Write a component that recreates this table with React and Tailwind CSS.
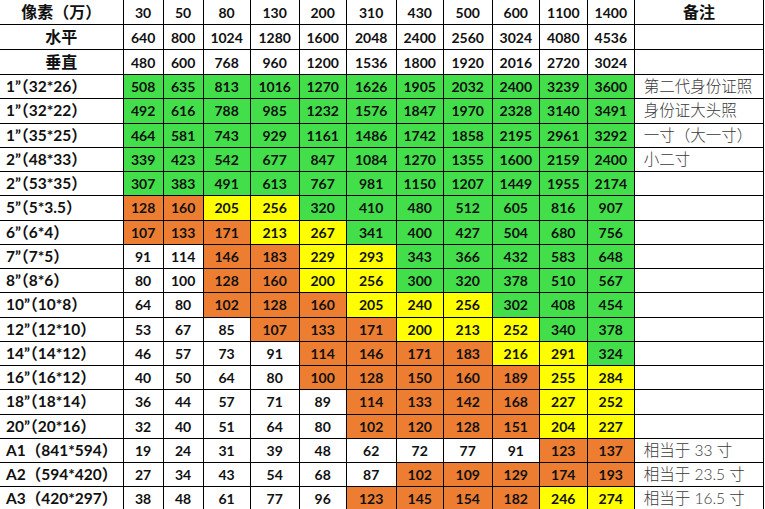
const heads = ['30', '50', '80', '130', '200', '310', '430', '500', '600', '1100', '1400'];

const colW = ['w-[123px]', 'w-[40px]', 'w-[40px]', 'w-[47px]', 'w-[49px]', 'w-[47px]', 'w-[50px]', 'w-[47px]', 'w-[49px]', 'w-[47px]', 'w-[48px]', 'w-[47px]', 'w-[129px]'];

const fills = {
    g: 'bg-[#42df4a]',
    y: 'bg-[#ffff00]',
    o: 'bg-[#ed7d31]',
    w: 'bg-white',
};

// label, values, colour codes, note
const rows = [
    ['1”（32*26）', '508 635 813 1016 1270 1626 1905 2032 2400 3239 3600', 'ggggggggggg', '第二代身份证照'],
    ['1”（32*22）', '492 616 788 985 1232 1576 1847 1970 2328 3140 3491', 'ggggggggggg', '身份证大头照'],
    ['1”（35*25）', '464 581 743 929 1161 1486 1742 1858 2195 2961 3292', 'ggggggggggg', '一寸（大一寸）'],
    ['2”（48*33）', '339 423 542 677 847 1084 1270 1355 1600 2159 2400', 'ggggggggggg', '小二寸'],
    ['2”（53*35）', '307 383 491 613 767 981 1150 1207 1449 1955 2174', 'ggggggggggg', ''],
    ['5”（5*3.5）', '128 160 205 256 320 410 480 512 605 816 907', 'ooyyggggggg', ''],
    ['6”（6*4）', '107 133 171 213 267 341 400 427 504 680 756', 'oooyygggggg', ''],
    ['7”（7*5）', '91 114 146 183 229 293 343 366 432 583 648', 'wwooyyggggg', ''],
    ['8”（8*6）', '80 100 128 160 200 256 300 320 378 510 567', 'wwooyyggggg', ''],
    ['10”（10*8）', '64 80 102 128 160 205 240 256 302 408 454', 'wwoooyyyggg', ''],
    ['12”（12*10）', '53 67 85 107 133 171 200 213 252 340 378', 'wwwoooyyygg', ''],
    ['14”（14*12）', '46 57 73 91 114 146 171 183 216 291 324', 'wwwwooooyyg', ''],
    ['16”（16*12）', '40 50 64 80 100 128 150 160 189 255 284', 'wwwwoooooyy', ''],
    ['18”（18*14）', '36 44 57 71 89 114 133 142 168 227 252', 'wwwwwooooyy', ''],
    ['20”（20*16）', '32 40 51 64 80 102 120 128 151 204 227', 'wwwwwooooyy', ''],
    ['A1（841*594）', '19 24 31 39 48 62 72 77 91 123 137', 'wwwwwwwwwoo', '相当于 33 寸'],
    ['A2（594*420）', '27 34 43 54 68 87 102 109 129 174 193', 'wwwwwwooooo', '相当于 23.5 寸'],
    ['A3（420*297）', '38 48 61 77 96 123 145 154 182 246 274', 'wwwwwooooyy', '相当于 16.5 寸'],
];

const cell = 'border border-black p-0 text-center align-middle';

function Head({ label, values, note }) {
    return (
        <tr className="h-[24px]">
            <td className={`${cell} border-l-0 text-[16px] font-bold`}>{label}</td>
            {values.map((v, i) => (
                <td key={i} className={cell}>{v}</td>
            ))}
            <td className={`${cell} text-[16px] font-bold`}>{note}</td>
        </tr>
    );
}

export default function App() {
    return (
        <div className="w-[765px] h-[509px] overflow-hidden bg-white">
            <table
                className="table-fixed border-collapse w-[764px] h-[509px] text-[14px] font-bold text-[#111]"
                style={{ fontFamily: 'Lato, "Noto Sans CJK SC", sans-serif' }}
            >
                <colgroup>
                    {colW.map((w, i) => <col key={i} className={w} />)}
                </colgroup>
                <tbody>
                    <tr className="h-[24px]">
                        <td className={`${cell} border-t-0 border-l-0 text-[16px]`}>像素（万）</td>
                        {heads.map(h => (
                            <td key={h} className={`${cell} border-t-0`}>{h}</td>
                        ))}
                        <td className={`${cell} border-t-0 text-[16px]`}>备注</td>
                    </tr>
                    <Head label="水平" values={'640 800 1024 1280 1600 2048 2400 2560 3024 4080 4536'.split(' ')} note="" />
                    <Head label="垂直" values={'480 600 768 960 1200 1536 1800 1920 2016 2720 3024'.split(' ')} note="" />
                    {rows.map(([label, vals, codes, note]) => (
                        <tr key={label} className="h-[24px]">
                            <td className={`${cell} border-l-0 text-left pl-[6px] text-[15.5px]`}>{label}</td>
                            {vals.split(' ').map((v, i) => (
                                <td key={i} className={`${cell} ${fills[codes[i]]}`}>{v}</td>
                            ))}
                            <td className={`${cell} text-left pl-[9px] text-[15.5px] font-light text-[#3a3a3a]`}>{note}</td>
                        </tr>
                    ))}
                </tbody>
            </table>
        </div>
    );
}
